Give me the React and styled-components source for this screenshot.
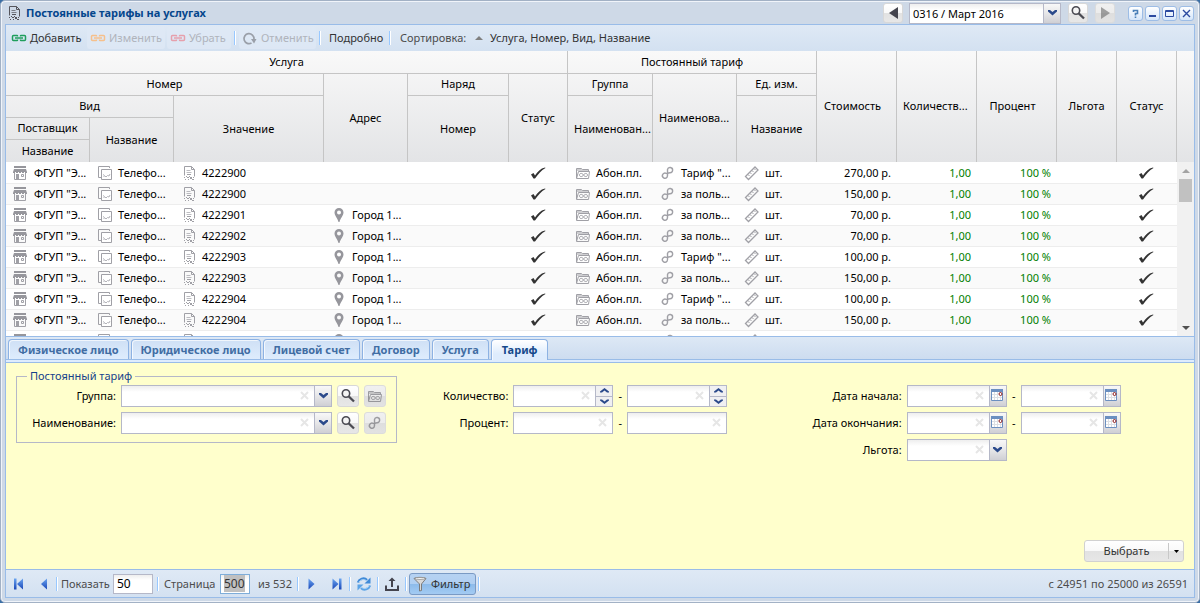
import React, { useState } from "react";
import styled, { createGlobalStyle } from "styled-components";

const FONT = '"Noto Sans", "DejaVu Sans", sans-serif';

const GlobalStyle = createGlobalStyle`
  * {
    box-sizing: border-box;
  }
  body {
    margin: 0;
    background: #3a6ea5;
    font: 11px/14px ${FONT};
    color: #000;
  }
  button, input, select {
    font: inherit;
    color: inherit;
    margin: 0;
  }
`;

/* ---------- window ---------- */

const Window = styled.div`
  display: flex;
  flex-direction: column;
  height: 100vh;
  min-width: 1200px;
  padding: 0 4px 4px;
  background: #ced9e7;
  border: 1px solid #a2b1c5;
  border-radius: 5px;
  box-shadow: inset 0 0 0 1px #f0f4fa;
  overflow: hidden;
`;

const TitleBar = styled.header`
  display: flex;
  align-items: center;
  height: 23px;
  padding: 1px 1px 0 1px;
`;

const Title = styled.h1`
  flex: 1;
  margin: 0 0 0 4px;
  font-size: 11px;
  line-height: 14px;
  font-weight: bold;
  color: #04468c;
`;

const PeriodBox = styled.div`
  display: flex;
  align-items: center;
  margin-right: 13px;
`;

const SquareButton = styled.button`
  display: flex;
  flex: none;
  align-items: center;
  justify-content: center;
  width: ${({ $small }) => ($small ? 20 : 22)}px;
  height: ${({ $small }) => ($small ? 20 : 22)}px;
  margin-left: ${({ $gap }) => $gap || 0}px;
  padding: 0;
  border: 1px solid #d8d8d8;
  border-radius: 3px;
  background: linear-gradient(#fff, #f9f9f9 48%, #e2e2e2 52%, #e7e7e7);
  &:disabled {
    border-color: #dcdcdc;
    background: linear-gradient(#f0f0f0, #ececec 48%, #dedede 52%, #e2e2e2);
  }
  &:disabled svg {
    opacity: 0.6;
  }
`;

const SquareGap = styled.span`
  width: 6px;
`;

const Tools = styled.div`
  display: flex;
  gap: 2px;
`;

const ToolButton = styled.button`
  display: flex;
  width: 15px;
  height: 15px;
  padding: 0;
  border: 1px solid #9dbde6;
  border-radius: 3px;
  background: linear-gradient(#fff, #d5e6fa);
`;

const Body = styled.main`
  display: flex;
  flex: 1;
  flex-direction: column;
  min-height: 0;
  border: 1px solid #99bce8;
`;

/* ---------- toolbars ---------- */

const Toolbar = styled.div`
  display: flex;
  flex: none;
  align-items: center;
  height: ${({ $bottom }) => ($bottom ? 28 : 26)}px;
  padding: 0 6px 0 2px;
  border-top: ${({ $bottom }) => ($bottom ? "1px solid #99bce8" : "none")};
  background: linear-gradient(#dfe9f5, #d3e1f1);
  color: #333;
  white-space: nowrap;
`;

const BarButton = styled.button`
  display: flex;
  flex: none;
  align-items: center;
  gap: 3px;
  width: ${({ $width }) => $width}px;
  height: 22px;
  padding: 0 ${({ $text }) => ($text ? 4 : 2)}px;
  border: 1px solid transparent;
  border-radius: 3px;
  background: ${({ $pressed }) =>
    $pressed ? "linear-gradient(#b6d2f2, #b0cff2 48%, #8dbbea 52%, #a3cbf3)" : "none"};
  border-color: ${({ $pressed }) => ($pressed ? "#7a9ac4" : "transparent")};
  color: #333;
  &:disabled {
    background: rgba(223, 232, 245, 0.8);
    color: #b0b4bc;
  }
  & + & {
    margin-left: 2px;
  }
`;

const Separator = styled.span`
  flex: none;
  width: 2px;
  height: 14px;
  margin: 0 ${({ $space }) => $space || 3}px;
  border-left: 1px solid #98c8ff;
  border-right: 1px solid #fff;
`;

const BarLabel = styled.label`
  width: ${({ $width }) => $width}px;
  margin: 0 2px 0 1px;
  color: #4c4c4c;
`;

const BarInput = styled.input`
  width: ${({ $width }) => $width}px;
  height: 20px;
  padding: 0 3px;
  border: 1px solid #b5b8c8;
  outline: none;
  background: linear-gradient(#eee, #fff 5px);
  color: #000;
  font-size: 12px;
  &:focus {
    border-color: #7eadd9;
  }
  &::selection {
    background: #c0c0c0;
    color: #333;
  }
`;

const PageTotal = styled.span`
  width: 37px;
  margin-left: 8px;
  color: #4c4c4c;
`;

const SortLabel = styled.span`
  width: 72px;
  margin-left: 6px;
  color: #4c4c4c;
`;

const SortText = styled.span`
  margin-left: 4px;
`;

const Status = styled.span`
  margin-left: auto;
  color: #4c4c4c;
`;

/* ---------- grid ---------- */

const GridHead = styled.div`
  flex: none;
  background: linear-gradient(#f9f9f9, #e3e4e6);
`;

const HeadTable = styled.table`
  width: 1171px;
  table-layout: fixed;
  border-collapse: separate;
  border-spacing: 0;
  tr {
    height: 22px;
  }
  tr:first-child {
    height: 23px;
  }
`;

const Th = styled.th`
  height: 22px;
  padding: 0 ${({ $sort }) => ($sort ? 14 : 6)}px 1px 6px;
  border-right: 1px solid #c5c5c5;
  border-bottom: ${({ $leaf }) => ($leaf ? "none" : "1px solid #c5c5c5")};
  font-weight: normal;
  text-align: center;
  white-space: nowrap;
`;

const GridBody = styled.div`
  display: flex;
  height: 174px;
  flex: none;
  overflow: hidden;
`;

const Rows = styled.div`
  flex: 1;
  overflow: hidden;
  padding-top: 1px;
  background: #fff;
`;

const DataTable = styled.table`
  width: 1171px;
  min-width: 100%;
  table-layout: fixed;
  border-collapse: separate;
  border-spacing: 0;
`;

const Row = styled.tr`
  height: 21px;
  background: ${({ $alt }) => ($alt ? "#fafafa" : "#fff")};
`;

const Td = styled.td`
  height: 21px;
  padding: 0 6px 0 7px;
  border-bottom: 1px solid #ededed;
  text-align: ${({ $align }) => $align || "left"};
  color: ${({ $green }) => ($green ? "#008000" : "#000")};
  white-space: nowrap;
`;

const IconText = styled.span`
  display: flex;
  align-items: center;
  gap: 5px;
`;

const TickBox = styled.span`
  display: flex;
  justify-content: center;
  padding-right: 3px;
`;

const Scrollbar = styled.div`
  display: flex;
  flex: none;
  flex-direction: column;
  align-items: center;
  width: 17px;
  background: #f1f1f1;
`;

const ScrollArrow = styled.span`
  display: flex;
  align-items: center;
  justify-content: center;
  height: 17px;
`;

const Thumb = styled.span`
  width: 13px;
  height: 23px;
  margin-bottom: auto;
  background: #c1c1c1;
`;

/* ---------- filter ---------- */

const TabBar = styled.div`
  display: flex;
  flex: none;
  align-items: flex-start;
  gap: 2px;
  height: 27px;
  padding: 2px 2px 0;
  border-top: 1px solid #99bce8;
  border-bottom: 1px solid #99bce8;
  background: linear-gradient(#dde8f5, #cbdbef);
  box-shadow: inset 0 -2px 0 #deecfd, inset 0 -3px 0 #99bce8;
`;

const Tab = styled.button`
  height: ${({ $active }) => ($active ? 21 : 20)}px;
  padding: 0 ${({ $active }) => ($active ? "10px 1px" : "9px 0")};
  border: 1px solid #8db2e3;
  border-bottom: none;
  border-radius: 4px 4px 0 0;
  background: ${({ $active }) =>
    $active ? "linear-gradient(#fff, #deecfd 70%)" : "linear-gradient(#cfe0f5, #deecfd)"};
  box-shadow: inset 1px 1px 0 rgba(255, 255, 255, 0.7);
  color: ${({ $active }) => ($active ? "#15498b" : "#416da3")};
  font-weight: bold;
  line-height: 18px;
`;

const FilterPanel = styled.form`
  display: flex;
  flex: 1;
  flex-direction: column;
  justify-content: space-between;
  min-height: 0;
  padding: 6px 10px 7px;
  background: #ffffcc;
`;

const Columns = styled.div`
  display: grid;
  grid-template-columns: repeat(3, 1fr);
  align-items: start;
  gap: 12px;
`;

const Fieldset = styled.fieldset`
  min-width: 0;
  margin: 0;
  padding: 2px 10px 8px;
  border: 1px solid #b5b8c8;
`;

const Legend = styled.legend`
  padding: 0 3px;
  color: #15428b;
`;

const FieldColumn = styled.div`
  padding-top: 16px;
`;

const FieldRow = styled.div`
  display: flex;
  align-items: center;
  & + & {
    margin-top: 5px;
  }
`;

const FieldLabel = styled.label`
  flex: none;
  width: ${({ $narrow }) => ($narrow ? 89 : 99)}px;
  margin-right: 5px;
  text-align: right;
  white-space: nowrap;
`;

const Dash = styled.span`
  width: 14px;
  text-align: center;
`;

const Field = styled.span`
  display: flex;
  align-items: center;
  flex: ${({ $width }) => ($width ? "none" : 1)};
  width: ${({ $width }) => ($width ? `${$width}px` : "auto")};
  height: ${({ $short }) => ($short ? 21 : 22)}px;
  border: 1px solid #b5b8c8;
  background: linear-gradient(#eee, #fff 6px);
`;

const FieldInput = styled.input`
  flex: 1;
  min-width: 0;
  height: 100%;
  padding: 0 3px;
  border: none;
  outline: none;
  background: none;
`;

const Trigger = styled.button`
  display: flex;
  flex: none;
  align-items: center;
  justify-content: center;
  align-self: stretch;
  width: 17px;
  padding: 0 0 2px;
  border: none;
  border-left: 1px solid #b5b8c8;
  background: linear-gradient(#f8f8f8, #e6e6e8 50%, #cfcfd4);
`;

const Spinner = styled.span`
  display: flex;
  flex-direction: column;
  align-self: stretch;
  width: 17px;
  border-left: 1px solid #b5b8c8;
`;

const SpinButton = styled.button`
  display: flex;
  flex: 1;
  align-items: center;
  justify-content: center;
  padding: 0;
  border: none;
  background: #f0f0f2;
  & + & {
    border-top: 1px solid #b5b8c8;
  }
`;

const SplitButton = styled.div`
  display: flex;
  align-self: flex-end;
  width: 100px;
  height: 22px;
  border: 1px solid #d1d1d1;
  border-radius: 3px;
  background: linear-gradient(#fff, #f9f9f9 48%, #e2e2e2 52%, #e7e7e7);
  color: #333;
`;

const SplitMain = styled.button`
  flex: 1;
  padding: 0;
  border: none;
  background: none;
`;

const SplitArrow = styled.button`
  display: flex;
  align-items: center;
  justify-content: center;
  width: 15px;
  margin: 2px 0;
  padding: 0;
  border: none;
  border-left: 1px solid #c8c8c8;
  background: none;
`;

/* ---------- icons ---------- */

const IconSvg = styled.svg`
  display: block;
  flex: none;
  fill: none;
`;

const Svg = ({ size = 16, children }) => (
  <IconSvg width={size} height={size} viewBox={`0 0 ${size} ${size}`} aria-hidden="true">
    {children}
  </IconSvg>
);

const DocIcon = ({ color = "#a0a0a6" }) => (
  <Svg>
    <path d="M3.5 10.500V1.500h7l3 3v7M10.500 1.500v3h3" stroke={color} />
    <path d="M5.500 5.500h4M5.500 7.500h5" stroke={color} opacity=".7" />
    <path
      d="M6 9h4v1H6zM3 12h1v1H3zM5 11h1v1H5zM6 12h2v1H6zM8 11h1v1H8zM9 12h2v2H9zM12 12h1v1h-1zM4 14h1v1H4zM7 14h1v1H7zM11 14h2v1h-2z"
      fill={color}
    />
  </Svg>
);

const ShopIcon = () => (
  <Svg>
    <path d="M1 1h12v2H1z" fill="#96969c" />
    <path d="M1 4h12l1 3v1h-2V7h-1v1H9V7H8v1H6V7H5v1H3V7H2v1H0V7z" fill="#96969c" />
    <path d="M1.500 8v6.500h11V8" stroke="#a0a0a6" />
    <path d="M3 9h3v5H3z" fill="#a0a0a6" />
    <path d="M8.500 9.500h2v2h-2z" stroke="#a0a0a6" />
  </Svg>
);

const KindIcon = () => (
  <Svg>
    <path d="M12.500 3V1.500h-11v11H4" stroke="#a0a0a6" />
    <path d="M4.500 4.500h10v10h-10z" fill="#fff" stroke="#a0a0a6" />
    <path d="M6 9.500l1.500 1 1.500 1.500 1.500-1.500L12 11l1-2M6.500 11.500h1" stroke="#b4b4ba" />
  </Svg>
);

const PinIcon = () => (
  <Svg>
    <path
      fillRule="evenodd"
      d="M8 1a4.500 4.500 0 0 1 4.500 4.500C12.500 8.500 9.500 11 8.500 15h-1C6.500 11 3.500 8.500 3.500 5.500A4.500 4.500 0 0 1 8 1zm0 2.500a2 2 0 1 0 0 4 2 2 0 0 0 0-4z"
      fill="#96969c"
    />
  </Svg>
);

const FolderIcon = ({ color = "#a0a0a6" }) => (
  <Svg>
    <path d="M1.500 13V3.500h5l1 1h6v2" stroke={color} />
    <path d="M2 4h5l1 1h5v1H2z" fill={color} opacity=".5" />
    <path d="M3.500 6.500h11l-1 7h-12z" stroke={color} />
    <path
      d="M8.500 10C7.500 8 4.500 7.800 4.500 10s3 2 4 0 4-2 4 0-3 2-4 0z"
      stroke={color}
    />
  </Svg>
);

const LoopIcon = ({ color = "#a0a0a6" }) => (
  <Svg>
    <path
      d="M7.500 4.500a2.600 2.600 0 1 1 2.600 3.200C8 8.500 7.300 8 6.500 8.500A2.600 2.600 0 1 0 7 12.300C8 11 7.500 9 7.500 4.500z"
      stroke={color}
      strokeWidth="1.400"
    />
  </Svg>
);

const RulerIcon = () => (
  <Svg>
    <path d="M1.500 11.500l9.500-9.500 3 3-9.500 9.500z" stroke="#a0a0a6" strokeWidth="1.300" />
    <path
      d="M4 9.500l1.500 1.500M6 7.500l1.500 1.500M8 5.500L9.500 7M10 3.500l1.500 1.500"
      stroke="#a0a0a6"
    />
  </Svg>
);

const TickIcon = () => (
  <Svg>
    <path d="M1 9.500L3.500 8l1.500 2.500C7.500 6.500 10.500 3.500 15 2.500l.5.500C11 5.500 8.500 9 5 13.500H3.500z" fill="#333" />
  </Svg>
);

const ChainIcon = ({ color }) => (
  <Svg>
    <path
      d="M6.500 6.500V6q0-.5-.5-.5H2.500Q1.500 5.500 1.500 6.500v3q0 1 1 1H6q.5 0 .5-.5V9.500M9.500 6.500V6q0-.5.5-.5h3.500q1 0 1 1v3q0 1-1 1H10q-.5 0-.5-.5V9.500"
      stroke={color}
      strokeWidth="1.500"
    />
    <path d="M4 8h8" stroke={color} strokeWidth="1.500" />
  </Svg>
);

const UndoIcon = () => (
  <Svg>
    <path d="M9.500 13A5 5 0 1 1 12 9" stroke="#9a9fa8" strokeWidth="1.700" />
    <path d="M9 9h5.500l-2.500 4.500z" fill="#9a9fa8" />
  </Svg>
);

const SearchIcon = () => (
  <Svg>
    <circle cx="6" cy="5.500" r="3.700" fill="#f4f4f4" stroke="#4a4a52" strokeWidth="1.600" />
    <path d="M8.800 8.500l5.200 5" stroke="#4a4a52" strokeWidth="2.400" />
  </Svg>
);

const ArrowIcon = ({ right, color = "#44444e" }) => (
  <Svg>
    <path d={right ? "M4 2l9 6-9 6z" : "M13 2L4 8l9 6z"} fill={color} />
  </Svg>
);

const ChevronIcon = () => (
  <Svg size={9}>
    <path d="M0 2h2l2.500 2L7 2h2v1.500L4.500 7.500 0 3.500z" fill="#2b4a8b" />
  </Svg>
);

const SpinIcon = ({ up }) => (
  <Svg size={9}>
    <path
      d={up ? "M0 6.500h2l2.500-2 2.500 2h2V5.500L4.500 2 0 5.500z" : "M0 2.500h2l2.500 2L7 2.500h2v1L4.500 7 0 3.500z"}
      fill="#2b4a8b"
    />
  </Svg>
);

const ClearIcon = () => (
  <Svg>
    <path d="M3 4l7 7M10 4l-7 7" stroke="#e6e6e6" strokeWidth="2" />
  </Svg>
);

const CalendarIcon = () => (
  <Svg size={13}>
    <path d="M.5.500h11v11H.5z" fill="#fff" stroke="#6b8fc0" />
    <path d="M0 0h12v3H0z" fill="#6b8fc0" />
    <path d="M3.500 3v8M6.500 3v8M9.500 7v4M1 5.500h5M1 8.500h10" stroke="#dcdfe4" />
    <circle cx="9.500" cy="5" r="1.500" fill="#fff" stroke="#8b1a1a" />
  </Svg>
);

const PagerIcon = ({ right, bar }) => (
  <Svg>
    <defs>
      <linearGradient id="pager" x1="0" y1="0" x2="0" y2="1">
        <stop offset="0" stopColor="#6aa5f0" />
        <stop offset="1" stopColor="#1a47b8" />
      </linearGradient>
    </defs>
    {right ? (
      <path d="M4.500 2.500l6 5.500-6 5.500z" fill="url(#pager)" />
    ) : (
      <path d="M12 2.500L6 8l6 5.500z" fill="url(#pager)" />
    )}
    {bar && <rect x={right ? 11 : 3} y="2.500" width="2.500" height="11" fill="url(#pager)" />}
  </Svg>
);

const RefreshIcon = () => (
  <Svg>
    <path d="M2 6.500C3 3 8 1 11 4" stroke="#3f8ad8" strokeWidth="2.400" />
    <path d="M14.500 1.500v6h-6z" fill="#3f8ad8" />
    <path d="M14 9.500C13 13 8 15 5 12" stroke="#5ba3e6" strokeWidth="2.400" />
    <path d="M1.500 14.500v-6h6z" fill="#5ba3e6" />
    <path d="M3 6c1.500-2.500 5-3.300 7.500-1.200M13 10c-1.500 2.500-5 3.300-7.500 1.200" stroke="#b9dcf8" />
  </Svg>
);

const ExportIcon = () => (
  <Svg>
    <path d="M2 9.500v4.500h12V9.500" stroke="#44444e" strokeWidth="2" />
    <path d="M8 11V4" stroke="#44444e" strokeWidth="2" />
    <path d="M4.500 5L8 1.500 11.500 5z" fill="#44444e" />
  </Svg>
);

const FunnelIcon = () => (
  <Svg>
    <path d="M2 2.500c2-1.500 10-1.500 12 0L9.500 8v6.500l-2 .5V8z" fill="#d8d8d8" stroke="#7c7c7c" />
    <ellipse cx="8" cy="2.500" rx="5" ry="1" fill="#f8f8f8" stroke="#8c8c8c" strokeWidth=".7" />
  </Svg>
);

const SmallTriangle = ({ up, color }) => (
  <Svg size={8}>
    <path d={up ? "M0 6l4-4 4 4z" : "M0 2h8L4 6z"} fill={color} />
  </Svg>
);

/* ---------- data ---------- */

const COLUMN_WIDTHS = [84, 84, 150, 84, 101, 59, 85, 84, 80, 80, 80, 80, 60, 60];

const ROWS = [
  ["4222900", false, 'Тариф "...', "270,00 р."],
  ["4222900", false, "за поль...", "150,00 р."],
  ["4222901", true, "за поль...", "70,00 р."],
  ["4222902", true, "за поль...", "70,00 р."],
  ["4222903", true, 'Тариф "...', "100,00 р."],
  ["4222903", true, "за поль...", "150,00 р."],
  ["4222904", true, 'Тариф "...', "100,00 р."],
  ["4222904", true, "за поль...", "150,00 р."],
];

const TABS = ["Физическое лицо", "Юридическое лицо", "Лицевой счет", "Договор", "Услуга", "Тариф"];

const ColGroup = () => (
  <colgroup>
    {COLUMN_WIDTHS.map((width, idx) => (
      <col key={idx} width={width} />
    ))}
  </colgroup>
);

const WithIcon = ({ icon, children }) => (
  <IconText>
    {icon}
    {children}
  </IconText>
);

const ComboField = ({ id, label, width }) => (
  <Field $width={width}>
    <FieldInput id={id} type="text" aria-label={label} />
    <ClearIcon />
    <Trigger type="button" aria-label="Открыть список">
      <ChevronIcon />
    </Trigger>
  </Field>
);

const SpinField = ({ id, label }) => (
  <Field $width={100}>
    <FieldInput id={id} type="text" aria-label={label} />
    <ClearIcon />
    <Spinner>
      <SpinButton type="button" aria-label="Больше">
        <SpinIcon up />
      </SpinButton>
      <SpinButton type="button" aria-label="Меньше">
        <SpinIcon />
      </SpinButton>
    </Spinner>
  </Field>
);

const PlainField = ({ id, label }) => (
  <Field $width={100}>
    <FieldInput id={id} type="text" aria-label={label} />
    <ClearIcon />
  </Field>
);

const DateField = ({ id, label }) => (
  <Field $width={100}>
    <FieldInput id={id} type="text" aria-label={label} />
    <ClearIcon />
    <Trigger type="button" aria-label="Календарь">
      <CalendarIcon />
    </Trigger>
  </Field>
);

const RangeRow = ({ id, label, field: FieldKind }) => (
  <FieldRow>
    <FieldLabel htmlFor={id}>{label}:</FieldLabel>
    <FieldKind id={id} />
    <Dash>-</Dash>
    <FieldKind id={`${id}-to`} label={`${label} по`} />
  </FieldRow>
);

const App = () => {
  const [tab, setTab] = useState("Тариф");
  const [period, setPeriod] = useState("0316 / Март 2016");
  const [perPage, setPerPage] = useState("50");
  const [page, setPage] = useState("500");

  return (
    <>
      <GlobalStyle />
      <Window>
        <TitleBar>
          <DocIcon color="#55555c" />
          <Title>Постоянные тарифы на услугах</Title>
          <PeriodBox>
            <SquareButton $small aria-label="Предыдущий период">
              <ArrowIcon />
            </SquareButton>
            <SquareGap />
            <Field $width={152} $short>
              <FieldInput
                aria-label="Период"
                value={period}
                onChange={(e) => setPeriod(e.target.value)}
              />
              <Trigger aria-label="Открыть список">
                <ChevronIcon />
              </Trigger>
            </Field>
            <SquareButton $small $gap={7} aria-label="Найти">
              <SearchIcon />
            </SquareButton>
            <SquareButton $small $gap={7} disabled aria-label="Следующий период">
              <ArrowIcon right color="#6a6a6a" />
            </SquareButton>
          </PeriodBox>
          <Tools>
            <ToolButton aria-label="Справка">
              <Svg size={13}>
                <path d="M4.500 5V3.500h4v3h-2v2M6.500 9.500v1.500" stroke="#4a80b8" strokeWidth="1.600" />
              </Svg>
            </ToolButton>
            <ToolButton aria-label="Свернуть">
              <Svg size={13}>
                <path d="M3 9h7" stroke="#2b4aa0" strokeWidth="2" />
              </Svg>
            </ToolButton>
            <ToolButton aria-label="Развернуть">
              <Svg size={13}>
                <path d="M2.500 3.500h8v6h-8zM2.500 4.500h8" stroke="#2b4aa0" />
              </Svg>
            </ToolButton>
            <ToolButton aria-label="Закрыть">
              <Svg size={13}>
                <path d="M3 3l7 7M10 3l-7 7" stroke="#2b4aa0" strokeWidth="1.400" />
              </Svg>
            </ToolButton>
          </Tools>
        </TitleBar>

        <Body>
          <Toolbar>
            <BarButton $width={77}>
              <ChainIcon color="#1f9e5c" />
              Добавить
            </BarButton>
            <BarButton $width={78} disabled>
              <ChainIcon color="#f6c08c" />
              Изменить
            </BarButton>
            <BarButton $width={64} disabled>
              <ChainIcon color="#e6a0ac" />
              Убрать
            </BarButton>
            <Separator />
            <BarButton $width={77} disabled>
              <UndoIcon />
              Отменить
            </BarButton>
            <Separator />
            <BarButton $width={62} $text>Подробно</BarButton>
            <Separator />
            <SortLabel>Сортировка:</SortLabel>
            <BarButton $width={182}>
              <SmallTriangle up color="#808080" />
              <SortText>Услуга, Номер, Вид, Название</SortText>
            </BarButton>
          </Toolbar>

          <GridHead>
            <HeadTable>
              <ColGroup />
              <thead>
                <tr>
                  <Th colSpan={6}>Услуга</Th>
                  <Th colSpan={3}>Постоянный тариф</Th>
                  <Th rowSpan={5} $leaf $sort>Стоимость</Th>
                  <Th rowSpan={5} $leaf $sort>Количеств...</Th>
                  <Th rowSpan={5} $leaf $sort>Процент</Th>
                  <Th rowSpan={5} $leaf>Льгота</Th>
                  <Th rowSpan={5} $leaf>Статус</Th>
                </tr>
                <tr>
                  <Th colSpan={3}>Номер</Th>
                  <Th rowSpan={4} $leaf>Адрес</Th>
                  <Th>Наряд</Th>
                  <Th rowSpan={4} $leaf>Статус</Th>
                  <Th>Группа</Th>
                  <Th rowSpan={4} $leaf $sort>Наименова...</Th>
                  <Th>Ед. изм.</Th>
                </tr>
                <tr>
                  <Th colSpan={2}>Вид</Th>
                  <Th rowSpan={3} $leaf>Значение</Th>
                  <Th rowSpan={3} $leaf>Номер</Th>
                  <Th rowSpan={3} $leaf>Наименован...</Th>
                  <Th rowSpan={3} $leaf>Название</Th>
                </tr>
                <tr>
                  <Th>Поставщик</Th>
                  <Th rowSpan={2} $leaf>Название</Th>
                </tr>
                <tr>
                  <Th $leaf>Название</Th>
                </tr>
              </thead>
            </HeadTable>
          </GridHead>

          <GridBody>
            <Rows>
              <DataTable>
                <ColGroup />
                <tbody>
                  {ROWS.map(([number, hasAddress, tariff, price], idx) => (
                    <Row key={idx} $alt={idx % 2 === 1}>
                      <Td><WithIcon icon={<ShopIcon />}>ФГУП "Э...</WithIcon></Td>
                      <Td><WithIcon icon={<KindIcon />}>Телефо...</WithIcon></Td>
                      <Td><WithIcon icon={<DocIcon />}>{number}</WithIcon></Td>
                      <Td>{hasAddress && <WithIcon icon={<PinIcon />}>Город 1...</WithIcon>}</Td>
                      <Td />
                      <Td><TickBox><TickIcon /></TickBox></Td>
                      <Td><WithIcon icon={<FolderIcon />}>Абон.пл.</WithIcon></Td>
                      <Td><WithIcon icon={<LoopIcon />}>{tariff}</WithIcon></Td>
                      <Td><WithIcon icon={<RulerIcon />}>шт.</WithIcon></Td>
                      <Td $align="right">{price}</Td>
                      <Td $align="right" $green>1,00</Td>
                      <Td $align="right" $green>100 %</Td>
                      <Td />
                      <Td><TickBox><TickIcon /></TickBox></Td>
                    </Row>
                  ))}
                  <Row>
                    <Td><WithIcon icon={<ShopIcon />} /></Td>
                    <Td><WithIcon icon={<KindIcon />} /></Td>
                    <Td><WithIcon icon={<DocIcon />} /></Td>
                    <Td><WithIcon icon={<PinIcon />} /></Td>
                    <Td />
                    <Td />
                    <Td><WithIcon icon={<FolderIcon />} /></Td>
                    <Td><WithIcon icon={<LoopIcon />} /></Td>
                    <Td><WithIcon icon={<RulerIcon />} /></Td>
                    <Td colSpan={5} />
                  </Row>
                </tbody>
              </DataTable>
            </Rows>
            <Scrollbar>
              <ScrollArrow><SmallTriangle up color="#a3a3a3" /></ScrollArrow>
              <Thumb />
              <ScrollArrow><SmallTriangle color="#505050" /></ScrollArrow>
            </Scrollbar>
          </GridBody>

          <TabBar role="tablist">
            {TABS.map((name) => (
              <Tab
                key={name}
                role="tab"
                aria-selected={name === tab}
                $active={name === tab}
                onClick={() => setTab(name)}
              >
                {name}
              </Tab>
            ))}
          </TabBar>

          <FilterPanel onSubmit={(e) => e.preventDefault()}>
            <Columns>
              <Fieldset>
                <Legend>Постоянный тариф</Legend>
                <FieldRow>
                  <FieldLabel htmlFor="group" $narrow>Группа:</FieldLabel>
                  <ComboField id="group" />
                  <SquareButton type="button" $gap={5} aria-label="Найти группу">
                    <SearchIcon />
                  </SquareButton>
                  <SquareButton type="button" $gap={5} disabled aria-label="Открыть группу">
                    <FolderIcon color="#66666c" />
                  </SquareButton>
                </FieldRow>
                <FieldRow>
                  <FieldLabel htmlFor="name" $narrow>Наименование:</FieldLabel>
                  <ComboField id="name" />
                  <SquareButton type="button" $gap={5} aria-label="Найти тариф">
                    <SearchIcon />
                  </SquareButton>
                  <SquareButton type="button" $gap={5} disabled aria-label="Открыть тариф">
                    <LoopIcon color="#66666c" />
                  </SquareButton>
                </FieldRow>
              </Fieldset>
              <FieldColumn>
                <RangeRow id="count" label="Количество" field={SpinField} />
                <RangeRow id="percent" label="Процент" field={PlainField} />
              </FieldColumn>
              <FieldColumn>
                <RangeRow id="start" label="Дата начала" field={DateField} />
                <RangeRow id="end" label="Дата окончания" field={DateField} />
                <FieldRow>
                  <FieldLabel htmlFor="benefit">Льгота:</FieldLabel>
                  <ComboField id="benefit" width={100} />
                </FieldRow>
              </FieldColumn>
            </Columns>
            <SplitButton>
              <SplitMain type="button">Выбрать</SplitMain>
              <SplitArrow type="button" aria-label="Ещё">
                <Svg size={7}>
                  <path d="M1 2h5L3.500 5z" fill="#000" />
                </Svg>
              </SplitArrow>
            </SplitButton>
          </FilterPanel>

          <Toolbar $bottom>
            <BarButton $width={22} aria-label="Первая страница"><PagerIcon bar /></BarButton>
            <BarButton $width={22} aria-label="Предыдущая страница"><PagerIcon /></BarButton>
            <Separator $space={2} />
            <BarLabel htmlFor="per-page" $width={50}>Показать</BarLabel>
            <BarInput
              id="per-page"
              $width={40}
              value={perPage}
              onChange={(e) => setPerPage(e.target.value)}
            />
            <Separator $space={4} />
            <BarLabel htmlFor="page" $width={54}>Страница</BarLabel>
            <BarInput
              id="page"
              $width={30}
              autoFocus
              value={page}
              onFocus={(e) => e.target.select()}
              onChange={(e) => setPage(e.target.value)}
            />
            <PageTotal>из 532</PageTotal>
            <Separator $space={2} />
            <BarButton $width={22} aria-label="Следующая страница"><PagerIcon right /></BarButton>
            <BarButton $width={22} aria-label="Последняя страница"><PagerIcon right bar /></BarButton>
            <Separator $space={2} />
            <BarButton $width={22} aria-label="Обновить"><RefreshIcon /></BarButton>
            <Separator $space={2} />
            <BarButton $width={22} aria-label="Выгрузить"><ExportIcon /></BarButton>
            <Separator $space={2} />
            <BarButton $width={67} $pressed aria-pressed="true">
              <FunnelIcon />
              Фильтр
            </BarButton>
            <Separator $space={2} />
            <Status>с 24951 по 25000 из 26591</Status>
          </Toolbar>
        </Body>
      </Window>
    </>
  );
};

export default App;
